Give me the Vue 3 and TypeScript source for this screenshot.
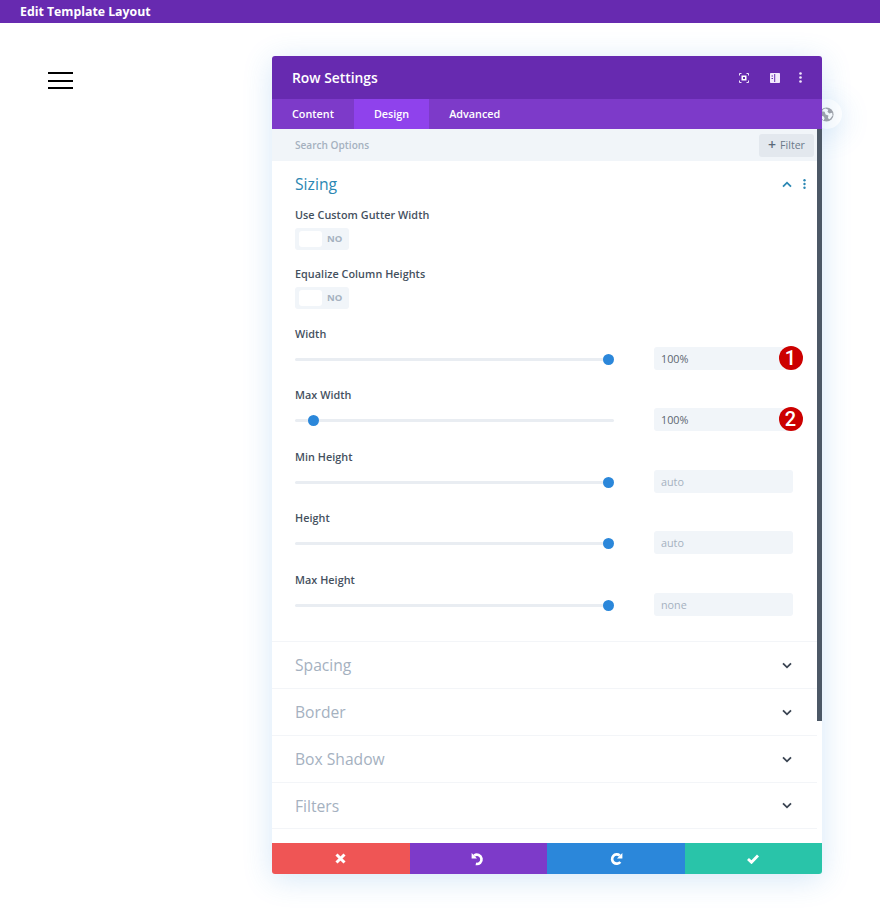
<script setup lang="ts">
interface Field { label: string; value: string; pos: number; badge?: string; muted: boolean }
const fields: Field[] = [
  { label: 'Width', value: '100%', pos: 313, badge: '1', muted: false },
  { label: 'Max Width', value: '100%', pos: 18, badge: '2', muted: false },
  { label: 'Min Height', value: 'auto', pos: 313, muted: true },
  { label: 'Height', value: 'auto', pos: 313, muted: true },
  { label: 'Max Height', value: 'none', pos: 313, muted: true },
]
const toggles = ['Use Custom Gutter Width', 'Equalize Column Heights']
const groups = ['Spacing', 'Border', 'Box Shadow', 'Filters']
</script>

<template>
  <div class="page">
    <div class="topbar">Edit Template Layout</div>
    <div class="canvas">
      <div class="burger"><i></i><i></i><i></i></div>
      <div class="window">
        <div class="globe">
          <svg width="15" height="15" viewBox="0 0 16 16"><circle cx="8" cy="8" r="7.5" fill="#a3a3a8"/><path d="M7 1.500 10 3 9 5 11 7l3-1 .5 3-3 4-2-1 .5-3-3-1-1-3-3-.5L5 2zM2 9l3 1 1 2-1 2.500L2.500 12z" fill="#fff"/></svg>
        </div>
        <div class="modal">
          <header class="head">
            <span class="title">Row Settings</span>
            <div class="head-icons">
              <svg width="10" height="10" viewBox="0 0 10 10" fill="none" stroke="#f1e8fb" stroke-width="1"><path d="M.5 2.500v-2h2M7.500.5h2v2M9.500 7.500v2h-2M2.500 9.500h-2v-2"/><rect x="2.500" y="2.500" width="5" height="5" fill="#fff" stroke="none"/><rect x="4" y="4" width="2" height="2" fill="#672ab0" stroke="none"/></svg>
              <svg width="10" height="10" viewBox="0 0 10 10"><path fill="#f1e8fb" fill-rule="evenodd" d="M.8 0h8.400a.8.800 0 0 1 .8.800v8.400a.8.800 0 0 1-.8.800H.8a.8.800 0 0 1-.8-.8V.8A.8.800 0 0 1 .8 0zM1.500 2.500v1h1.500v-1zM1.500 5v1h1.500V5zM4.200 1v8h1V1z"/></svg>
              <svg width="3" height="11" viewBox="0 0 3 11" fill="#f1e8fb"><circle cx="1.500" cy="1.500" r="1.300"/><circle cx="1.500" cy="5.500" r="1.300"/><circle cx="1.500" cy="9.500" r="1.300"/></svg>
            </div>
          </header>
          <nav class="tabs">
            <span class="tab">Content</span>
            <span class="tab active">Design</span>
            <span class="tab">Advanced</span>
          </nav>
          <div class="body">
            <div class="main">
              <div class="search">
                <span>Search Options</span>
                <span class="filter"><b>+</b> Filter</span>
              </div>
              <section class="sizing">
                <div class="sizing-head">
                  <h2>Sizing</h2>
                  <div class="sizing-icons">
                    <svg width="10" height="7" viewBox="0 0 10 7" fill="none" stroke="#2b87b3" stroke-width="1.800"><path d="M1 5.700 5 1.700l4 4"/></svg>
                    <svg width="3" height="10" viewBox="0 0 3 10" fill="#2b87b3"><circle cx="1.500" cy="1.300" r="1.200"/><circle cx="1.500" cy="5" r="1.200"/><circle cx="1.500" cy="8.700" r="1.200"/></svg>
                  </div>
                </div>
                <div v-for="t in toggles" :key="t" class="toggle-field">
                  <label>{{ t }}</label>
                  <div class="toggle"><span class="knob"></span><span class="no">NO</span></div>
                </div>
                <div v-for="f in fields" :key="f.label" class="range-field">
                  <label>{{ f.label }}</label>
                  <div class="range-row">
                    <div class="track"><span class="thumb" :style="{ left: f.pos + 'px' }"></span></div>
                    <div class="input" :class="{ muted: f.muted }">
                      {{ f.value }}
                      <span v-if="f.badge" class="badge">{{ f.badge }}</span>
                    </div>
                  </div>
                </div>
              </section>
              <div v-for="g in groups" :key="g" class="group">
                <span>{{ g }}</span>
                <svg width="10" height="7" viewBox="0 0 10 7" fill="none" stroke="#3a4452" stroke-width="1.800"><path d="M1 1.300l4 4 4-4"/></svg>
              </div>
            </div>
            <div class="scrollbar"></div>
          </div>
          <footer class="actions">
            <button class="red">
              <svg width="11" height="11" viewBox="0 0 11 11" fill="none" stroke="#fff" stroke-width="3"><path d="M1.500 1.500l8 8M9.500 1.500l-8 8"/></svg>
            </button>
            <button class="purple">
              <svg width="14" height="14" viewBox="0 0 13 13" fill="none" stroke="#fff" stroke-width="2.500"><path d="M3 3.300A4.300 4.300 0 1 1 4.500 11"/><path d="M.6 1v5h5z" fill="#fff" stroke="none"/></svg>
            </button>
            <button class="blue">
              <svg width="14" height="14" viewBox="0 0 13 13" fill="none" stroke="#fff" stroke-width="2.500"><path d="M10 3.300A4.300 4.300 0 1 0 10.500 9.300"/><path d="M12.400 1v5h-5z" fill="#fff" stroke="none"/></svg>
            </button>
            <button class="green">
              <svg width="12" height="10" viewBox="0 0 12 10" fill="none" stroke="#fff" stroke-width="2.800"><path d="M1 5l3.500 3.300L11 1.500"/></svg>
            </button>
          </footer>
        </div>
      </div>
    </div>
  </div>
</template>

<style>
html, body { margin: 0; background: #fff; }
</style>

<style scoped>
.page {
  height: 911px;
  overflow: hidden;
  font-family: "Open Sans", sans-serif;
  background: #fff;
}
.topbar {
  height: 23px;
  line-height: 23px;
  padding-left: 20px;
  background: #672ab0;
  color: #fff;
  font-size: 12.300px;
  font-weight: 700;
}
.canvas {
  display: flex;
  align-items: flex-start;
  padding: 33px 0 0 48px;
}
.burger {
  width: 25px;
  margin-top: 16px;
  display: flex;
  flex-direction: column;
  gap: 5.500px;
  flex: none;
}
.burger i {
  display: block;
  height: 2px;
  background: #000;
}
.window {
  position: relative;
  margin-left: 199px;
  width: 550px;
}
.globe {
  position: absolute;
  left: 540px;
  top: 43px;
  width: 30px;
  height: 30px;
  border-radius: 50%;
  background: #fff;
  box-shadow: 0 5px 30px rgba(43, 135, 218, 0.2);
  display: flex;
  align-items: center;
  justify-content: flex-end;
  padding-right: 8px;
  box-sizing: border-box;
}
.modal {
  position: relative;
  border-radius: 3px;
  background: #fff;
  box-shadow: 0 5px 30px rgba(43, 135, 218, 0.2);
  overflow: hidden;
}
.head {
  height: 43px;
  background: #672ab0;
  display: flex;
  align-items: center;
  justify-content: space-between;
  padding: 0 20px;
  color: #fff;
}
.title {
  font-size: 13.850px;
  font-weight: 600;
}
.head-icons {
  display: flex;
  align-items: center;
  gap: 19px;
}
.head-icons svg:first-child {
  margin-right: 2px;
}
.tabs {
  height: 30px;
  background: #7d3ac9;
  display: flex;
  font-size: 10.800px;
  font-weight: 600;
  color: #fff;
}
.tab {
  line-height: 30px;
  padding: 0 20px;
}
.tab.active {
  background: #8f42ec;
}
.body {
  position: relative;
  height: 714px;
  overflow: hidden;
}
.main {
  height: 100%;
}
.scrollbar {
  position: absolute;
  right: 0;
  top: 0;
  width: 5px;
  height: 592px;
  background: #4c5866;
}
.search {
  height: 32px;
  background: #f1f5f9;
  display: flex;
  align-items: center;
  justify-content: space-between;
  padding: 0 8px 0 23px;
  font-size: 10.100px;
  font-weight: 600;
  color: #a5b1bf;
}
.filter {
  height: 23px;
  width: 55px;
  background: #e3e8ee;
  border-radius: 3px;
  display: flex;
  align-items: center;
  justify-content: center;
  gap: 4px;
  color: #6b7a8a;
  font-size: 10.600px;
  font-weight: 400;
}
.filter b {
  font-size: 14px;
  font-weight: 600;
  color: #5a6978;
  line-height: 1;
}
.sizing {
  height: 481px;
  padding: 0 23px;
  border-bottom: 1px solid #f3f5f8;
  box-sizing: border-box;
}
.sizing-head {
  height: 46px;
  display: flex;
  align-items: center;
  justify-content: space-between;
  margin-right: -6.500px;
}
h2 {
  margin: 0;
  font-size: 15.700px;
  font-weight: 400;
  color: #2b87b3;
}
.sizing-icons {
  display: flex;
  align-items: center;
  gap: 10.500px;
}
label {
  display: block;
  font-size: 10.800px;
  font-weight: 600;
  letter-spacing: 0.05px;
  color: #44505e;
  line-height: 16px;
}
.toggle-field {
  height: 59.300px;
}
.toggle-field label {
  margin-bottom: 5px;
}
.toggle {
  width: 54px;
  height: 22px;
  background: #f1f5f9;
  border-radius: 3px;
  display: flex;
  align-items: center;
  padding-left: 4px;
  box-sizing: border-box;
}
.knob {
  width: 23px;
  height: 16px;
  background: #fff;
  border-radius: 3px;
}
.no {
  margin-left: 5px;
  margin-bottom: 1px;
  font-size: 9.500px;
  font-weight: 700;
  color: #a5b1bf;
}
.range-field {
  height: 61.600px;
}
.range-row {
  display: flex;
  align-items: center;
  justify-content: space-between;
  padding-right: 6px;
  margin-top: 5px;
}
.track {
  position: relative;
  width: 319px;
  height: 3px;
  margin-top: 2px;
  background: #e9edf2;
  border-radius: 2px;
}
.thumb {
  position: absolute;
  top: -4px;
  width: 11px;
  height: 11px;
  margin-left: -5.500px;
  border-radius: 50%;
  background: #2b87da;
}
.input {
  position: relative;
  width: 139px;
  height: 23px;
  line-height: 23px;
  padding-left: 7px;
  box-sizing: border-box;
  background: #f1f5f9;
  border-radius: 3px;
  font-size: 10.800px;
  color: #5c6670;
}
.input.muted {
  color: #a5b1bf;
}
.badge {
  position: absolute;
  right: -9.500px;
  top: -1px;
  width: 24px;
  height: 24px;
  border-radius: 50%;
  background: #cc0000;
  color: #fff;
  text-align: center;
  font-family: Roboto, sans-serif;
  font-size: 20px;
  font-weight: 500;
  line-height: 24px;
}
.group {
  height: 47px;
  margin-right: 5px;
  padding: 0 25px 0 23px;
  display: flex;
  align-items: center;
  justify-content: space-between;
  border-bottom: 1px solid #f3f5f8;
  box-sizing: border-box;
  font-size: 15.650px;
  color: #a5b1bf;
}
.group:last-child {
  height: 46px;
}
.actions {
  display: grid;
  grid-template-columns: repeat(4, 1fr);
  height: 31px;
}
.actions button {
  border: 0;
  padding: 0;
  display: flex;
  align-items: center;
  justify-content: center;
}
.red { background: #ef5555; }
.purple { background: #7d3ac9; }
.blue { background: #2b87da; }
.green { background: #29c4a9; }
</style>
